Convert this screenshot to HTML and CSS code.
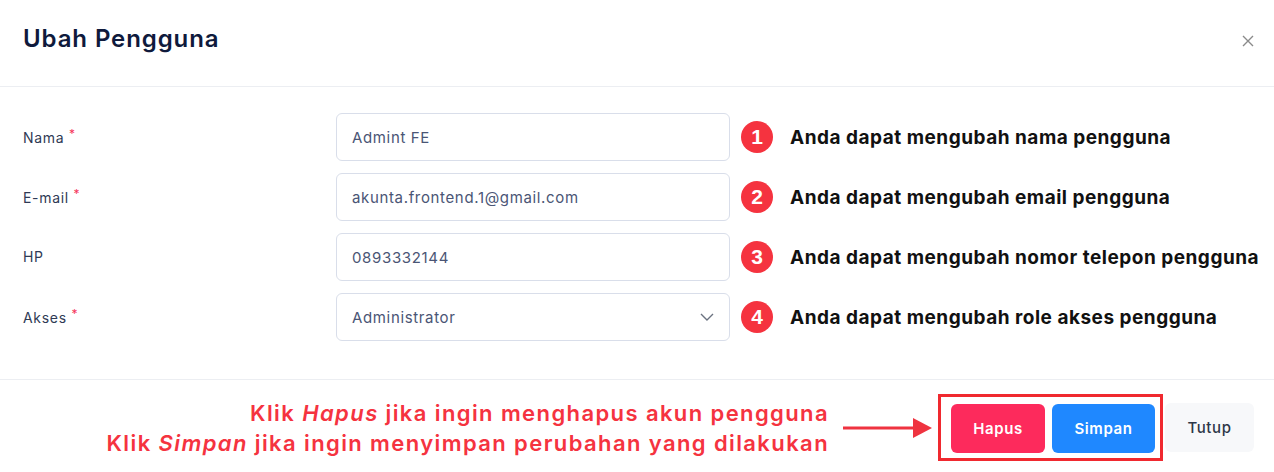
FILE: index.html
```html
<!DOCTYPE html>
<html lang="id">
<head>
<meta charset="utf-8">
<title>Ubah Pengguna</title>
<link rel="stylesheet" href="styles.css">
</head>
<body>
<div class="modal">
  <header class="modal-header">
    <h1 class="modal-title">Ubah Pengguna</h1>
    <button class="close-btn" aria-label="Tutup">
      <svg width="12" height="12" viewBox="0 0 12 12"><path d="M1 1L11 11M11 1L1 11" stroke="#8a8a8a" stroke-width="1.4" fill="none"/></svg>
    </button>
  </header>
  <main class="modal-body">
    <div class="row">
      <label class="label">Nama <span class="req">*</span></label>
      <div class="input">Admint FE</div>
      <span class="badge">1</span>
      <span class="note">Anda dapat mengubah nama pengguna</span>
    </div>
    <div class="row">
      <label class="label">E-mail <span class="req">*</span></label>
      <div class="input">akunta.frontend.1@gmail.com</div>
      <span class="badge">2</span>
      <span class="note">Anda dapat mengubah email pengguna</span>
    </div>
    <div class="row">
      <label class="label">HP</label>
      <div class="input">0893332144</div>
      <span class="badge">3</span>
      <span class="note">Anda dapat mengubah nomor telepon pengguna</span>
    </div>
    <div class="row">
      <label class="label">Akses <span class="req">*</span></label>
      <div class="input select">
        <span>Administrator</span>
        <svg width="14" height="8" viewBox="0 0 14 8"><path d="M1 1L7 7L13 1" stroke="#6b7280" stroke-width="1.4" fill="none"/></svg>
      </div>
      <span class="badge">4</span>
      <span class="note">Anda dapat mengubah role akses pengguna</span>
    </div>
  </main>
  <footer class="modal-footer">
    <div class="hint">
      <p class="hint-text">Klik <em>Hapus</em> jika ingin menghapus akun pengguna<br>Klik <em>Simpan</em> jika ingin menyimpan perubahan yang dilakukan</p>
      <svg class="arrow" width="90" height="22" viewBox="0 0 90 22"><path d="M0 11H72" stroke="#ef3340" stroke-width="3"/><path d="M70 1L89 11L70 21Z" fill="#ef3340"/></svg>
    </div>
    <div class="highlight">
      <button class="btn btn-danger">Hapus</button>
      <button class="btn btn-primary">Simpan</button>
    </div>
    <button class="btn btn-light">Tutup</button>
  </footer>
</div>
</body>
</html>
```
FILE: styles.css
```css
* { box-sizing: border-box; }
html, body { margin: 0; padding: 0; background: #fff; }
body { font-family: Inter, "Noto Sans", sans-serif; width: 1274px; height: 472px; overflow: hidden; }

.modal-header {
  height: 87px;
  border-bottom: 1px solid #eceef2;
  display: flex;
  align-items: center;
  justify-content: space-between;
  padding: 0 20px 10px 23px;
}
.modal-title { margin: 0; font-size: 24px; font-weight: 600; color: #0f1a3c; letter-spacing: 0.9px; }
.close-btn { background: none; border: 0; padding: 0; width: 12px; height: 12px; display: flex; margin-top: 6px; }

.modal-body {
  padding: 26px 0 38px 23px;
  display: flex;
  flex-direction: column;
  gap: 12px;
  border-bottom: 1px solid #eceef2;
}
.row { display: flex; align-items: center; height: 48px; }
.label { width: 313px; font-size: 14px; color: #2f3a55; letter-spacing: 0.7px; margin-top: -2px; }
.req { color: #f5335a; font-size: 12px; vertical-align: 5px; margin-left: 0; }
.input {
  width: 394px; height: 48px;
  border: 1px solid #d9deea; border-radius: 6px;
  padding: 0 15px;
  display: flex; align-items: center;
  font-size: 15px; color: #4a5575; letter-spacing: 0.65px;
}
.select { justify-content: space-between; padding-right: 15px; }
.badge {
  width: 32px; height: 32px; border-radius: 50%;
  background: #f5333f; color: #fff;
  display: flex; align-items: center; justify-content: center;
  font-family: "Liberation Sans", Arial, sans-serif; font-weight: 700; font-size: 21px;
  margin-left: 11px; margin-right: 17px;
}
.note { font-size: 19px; font-weight: 700; color: #111; letter-spacing: 0.5px; }

.modal-footer {
  display: flex; align-items: center; justify-content: flex-end;
  padding: 14px 20px 0 0;
}
.hint { display: flex; align-items: center; margin-right: 5px; }
.hint-text {
  margin: 0; text-align: right;
  font-size: 22px; line-height: 30px; font-weight: 600; color: #f5333f;
  letter-spacing: 1.4px;
  margin-right: 14px;
}
.hint-text em { font-style: italic; }
.arrow { display: block; }
.highlight {
  border: 3px solid #f0292f;
  padding: 7px 5px 5px 10px;
  display: flex; gap: 7px;
  margin-right: 2px;
}
.btn {
  border: 0; border-radius: 6px; height: 49px;
  font-family: Inter, "Noto Sans", sans-serif; font-size: 15px; font-weight: 600;
  letter-spacing: 0.6px;
  cursor: pointer;
}
.btn-danger { background: #fd2a5c; color: #fff; width: 94px; }
.btn-primary { background: #1f88ff; color: #fff; width: 103px; }
.btn-light { background: #f7f8fa; color: #2d3748; width: 89px; font-weight: 500; }
```
